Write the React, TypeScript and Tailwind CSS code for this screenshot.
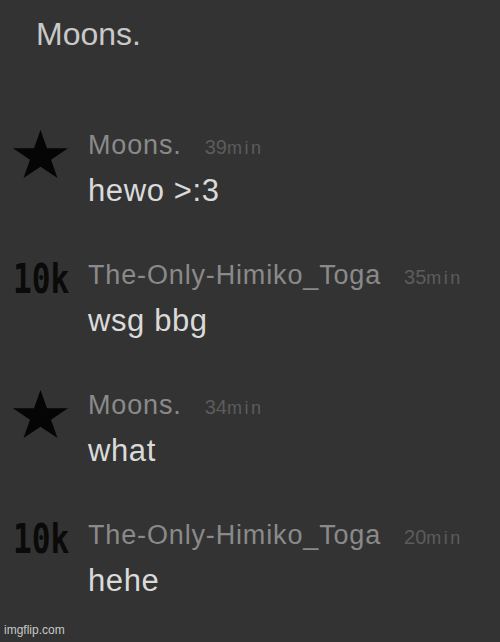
const MESSAGES = [
  { user: 'Moons.', badge: 'star', num: '39', text: 'hewo >:3' },
  { user: 'The-Only-Himiko_Toga', badge: '10k', num: '35', text: 'wsg bbg' },
  { user: 'Moons.', badge: 'star', num: '34', text: 'what' },
  { user: 'The-Only-Himiko_Toga', badge: '10k', num: '20', text: 'hehe' },
]

function Star() {
  return (
    <svg
      className="block"
      width="55"
      height="48"
      viewBox="-95.1 -100 190.2 180.9"
      preserveAspectRatio="none"
    >
      <polygon
        fill="#050505"
        points="0,-100 22.45,-30.9 95.1,-30.9 36.3,11.8 58.8,80.9 0,38.2 -58.8,80.9 -36.3,11.8 -95.1,-30.9 -22.45,-30.9"
      />
    </svg>
  )
}

function Badge({ kind }: { kind: string }) {
  if (kind === 'star') {
    return (
      <div className="mt-[1px]">
        <Star />
      </div>
    )
  }
  return (
    <div
      className="mt-[-2px] origin-left scale-x-[0.76] whitespace-nowrap text-[41px] font-bold leading-[44px] text-[#0a0a0a]"
      style={{ fontFamily: '"DejaVu Sans Mono", monospace' }}
    >
      10k
    </div>
  )
}

export default function App() {
  return (
    <div
      className="relative h-[642px] w-[500px] overflow-hidden bg-[#333333]"
      style={{ fontFamily: '"Liberation Sans", Arial, sans-serif' }}
    >
      {/* Header */}
      <div className="pl-[36px] pt-[16px] text-[32px] leading-[36px] text-[#c9c9c9]">Moons.</div>

      {/* Messages */}
      <div className="mt-[77px] flex flex-col gap-[48px]">
        {MESSAGES.map((m, i) => (
          <div key={i} className="flex">
            <div className="w-[88px] shrink-0 pl-[13px]">
              <Badge kind={m.badge} />
            </div>
            <div>
              <div className="flex items-baseline whitespace-nowrap">
                <span className="text-[27px] leading-[32px] tracking-[0.85px] text-[#8a8a8a]">
                  {m.user}
                </span>
                <span className="ml-[23px] text-[20px] text-[#5c5c5c]">{m.num}</span>
                <span className="text-[18px] tracking-[2.5px] text-[#5c5c5c]">min</span>
              </div>
              <div className="mt-[9px] text-[31px] leading-[40px] tracking-[0.6px] text-[#dadada]">
                {m.text}
              </div>
            </div>
          </div>
        ))}
      </div>

      <div className="absolute bottom-[3px] left-[4px] text-[12px] text-[#c8c8c8]">imgflip.com</div>
    </div>
  )
}
